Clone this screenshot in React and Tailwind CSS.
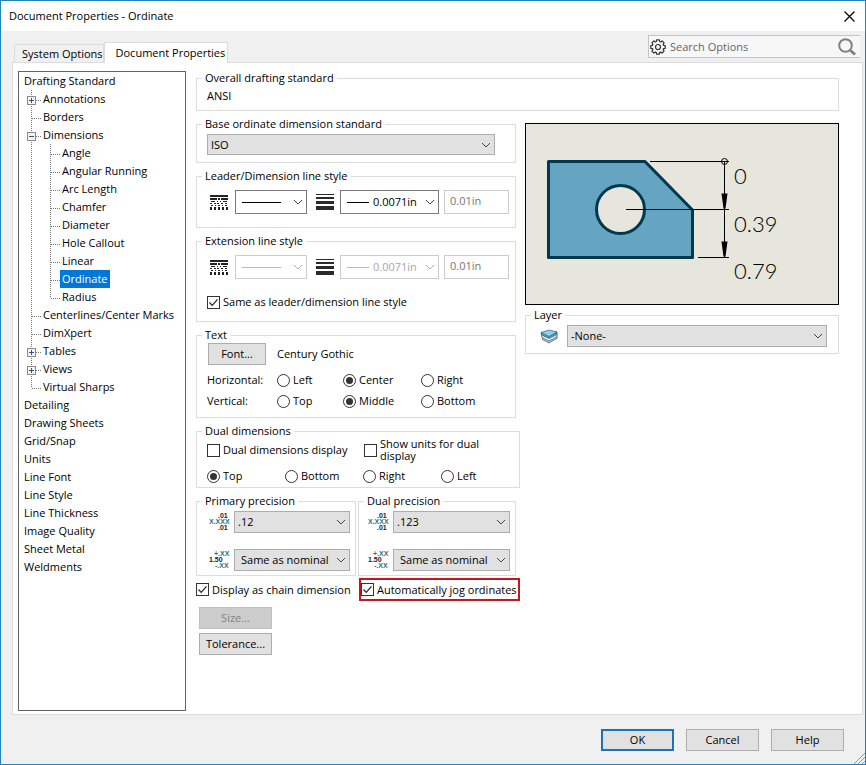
import React from 'react';

const treeItems = [
  { label: 'Drafting Standard', guides: [] },
  { label: 'Annotations', guides: ['plus'] },
  { label: 'Borders', guides: ['tee'] },
  { label: 'Dimensions', guides: ['minus'] },
  { label: 'Angle', guides: ['line', 'tee'] },
  { label: 'Angular Running', guides: ['line', 'tee'] },
  { label: 'Arc Length', guides: ['line', 'tee'] },
  { label: 'Chamfer', guides: ['line', 'tee'] },
  { label: 'Diameter', guides: ['line', 'tee'] },
  { label: 'Hole Callout', guides: ['line', 'tee'] },
  { label: 'Linear', guides: ['line', 'tee'] },
  { label: 'Ordinate', guides: ['line', 'tee'], selected: true },
  { label: 'Radius', guides: ['line', 'elbow'] },
  { label: 'Centerlines/Center Marks', guides: ['tee'] },
  { label: 'DimXpert', guides: ['tee'] },
  { label: 'Tables', guides: ['plus'] },
  { label: 'Views', guides: ['plus'] },
  { label: 'Virtual Sharps', guides: ['elbow'] },
  { label: 'Detailing', guides: [] },
  { label: 'Drawing Sheets', guides: [] },
  { label: 'Grid/Snap', guides: [] },
  { label: 'Units', guides: [] },
  { label: 'Line Font', guides: [] },
  { label: 'Line Style', guides: [] },
  { label: 'Line Thickness', guides: [] },
  { label: 'Image Quality', guides: [] },
  { label: 'Sheet Metal', guides: [] },
  { label: 'Weldments', guides: [] },
];

const TreeGuide = ({ kind }) => {
  const box = kind === 'plus' || kind === 'minus';
  return (
    <svg className="h-[18px] w-[19px] shrink-0" viewBox="0 0 19 18" fill="none" shapeRendering="crispEdges">
      <path d={kind === 'elbow' ? 'M9.5 0V10' : 'M9.5 0V18'} stroke="#777" strokeDasharray="1 1" />
      {kind !== 'line' && <path d="M10 10.5H19" stroke="#777" strokeDasharray="1 1" />}
      {box && (
        <>
          <rect x="5.5" y="6.5" width="8" height="8" fill="#f4f4f4" stroke="#8a8a8a" />
          <path d="M7 10.5h5" stroke="#334f9a" />
        </>
      )}
      {kind === 'plus' && <path d="M9.5 8v5" stroke="#334f9a" />}
    </svg>
  );
};

const Group = ({ title, className = '', bodyClass = '', children }) => (
  <fieldset className={`min-w-0 border border-[#dcdcdc] ${className}`}>
    <legend className="ml-[5px] px-[3px] leading-[14px]">{title}</legend>
    <div className={bodyClass}>{children}</div>
  </fieldset>
);

const Select = ({ label, options, white, disabled, line, className = '', textClass = 'pl-[3px]' }) => (
  <div className={`relative ${className}`}>
    <select
      aria-label={label}
      disabled={disabled}
      className={`block h-full w-full appearance-none border pr-5 outline-none ${
        white ? (disabled ? 'border-[#cccccc] bg-white text-[#a8a8a8]' : 'border-[#7a7a7a] bg-white') : 'border-[#adadad] bg-[#e1e1e1]'
      } ${textClass}`}
    >
      {options.map((option) => (
        <option key={option}>{option}</option>
      ))}
    </select>
    {line && <span className={`pointer-events-none absolute left-[7px] top-1/2 h-px ${line} ${disabled ? 'bg-[#b8b8b8]' : 'bg-black'}`} />}
    <svg className="pointer-events-none absolute right-1 top-1/2 -mt-[3px] h-[6px] w-[10px]" viewBox="0 0 10 6" fill="none" stroke={disabled ? '#b0b0b0' : '#444'}>
      <path d="M1 1l4 4 4-4" />
    </svg>
  </div>
);

const Checkbox = ({ label, checked, className = '', labelClass = '' }) => (
  <label className={`flex items-center gap-[3px] ${className}`}>
    <span className="relative block size-[13px] shrink-0">
      <input type="checkbox" defaultChecked={checked} className="peer block size-[13px] appearance-none border border-[#333] bg-white" />
      <svg className="pointer-events-none absolute inset-0 hidden size-[13px] peer-checked:block" viewBox="0 0 13 13" fill="none" stroke="#222" strokeWidth="1.2">
        <path d="M2.5 6.5l2.7 2.8 5.3-6" />
      </svg>
    </span>
    <span className={labelClass}>{label}</span>
  </label>
);

const Radio = ({ name, label, checked }) => (
  <label className="flex items-center gap-[3px]">
    <input
      type="radio"
      name={name}
      defaultChecked={checked}
      className="grid size-[13px] shrink-0 appearance-none place-content-center rounded-full border border-[#333] bg-white before:block before:size-[7px] before:rounded-full checked:before:bg-[#333]"
    />
    {label}
  </label>
);

const Button = ({ children, disabled, className = 'border border-[#adadad]' }) => (
  <button disabled={disabled} className={`h-[22px] bg-[#e1e1e1] disabled:border-[#bfbfbf] disabled:bg-[#cccccc] disabled:text-[#838383] ${className}`}>
    {children}
  </button>
);

const LineStyleIcon = () => (
  <svg className="h-[15px] w-[18px] shrink-0" viewBox="0 0 18 15" fill="#222" shapeRendering="crispEdges">
    <path d="M0 0h18v2H0z" />
    <path d="M0 3h7v2H0zM8 3h2v2H8zM11 3h7v2h-7z" />
    <path d="M1 6h4v1H1zM7 6h1v1H7zM10 6h1v1h-1zM13 6h4v1h-4z" />
    <path d="M0 8h2v1H0zM4 8h2v1H4zM7 8h2v1H7zM11 8h2v1h-2zM15 8h2v1h-2z" />
    <path d="M1 10h2v1H1zM5 10h1v1H5zM8 10h2v1H8zM12 10h1v1h-1zM15 10h2v1h-2z" />
    <path d="M0 12h2v3H0zM4 12h2v3H4zM8 12h2v3H8zM12 12h2v3h-2zM16 12h2v3h-2z" />
  </svg>
);

const LineWidthIcon = () => (
  <svg className="h-4 w-[18px] shrink-0" viewBox="0 0 18 16" fill="#2a2a2a" shapeRendering="crispEdges">
    <path d="M0 0h18v1H0zM0 3h18v2H0zM0 7h18v3H0zM0 12h18v4H0z" />
  </svg>
);

const LineStyleRow = ({ name, disabled }) => (
  <div className="flex items-center pl-[13px]">
    <LineStyleIcon />
    <Select label={`${name} line style`} options={['']} white disabled={disabled} line="w-[39px]" className="ml-[7px] h-6 w-[72px]" />
    <span className="ml-[9px] flex"><LineWidthIcon /></span>
    <Select label={`${name} line thickness`} options={['0.0071in']} white disabled={disabled} line="w-[22px]" className="ml-[6px] h-6 w-[99px]" textClass="pl-8" />
    <input
      aria-label={`${name} custom thickness`}
      defaultValue="0.01in"
      readOnly
      className="ml-[5px] h-6 w-[65px] border border-[#cccccc] bg-white px-[5px] pb-1 text-[#777] outline-none"
    />
  </div>
);

const PrecisionIcon = () => (
  <svg className="h-5 w-[22px] shrink-0" viewBox="0 0 22 20" fontFamily="Liberation Sans, sans-serif" fontSize="7" fontWeight="bold">
    <text x="9" y="6" fill="#222">.01</text>
    <text x="0" y="12" fill="#2b7387">X.XXX</text>
    <text x="9" y="18" fill="#222">.01</text>
  </svg>
);

const ToleranceIcon = () => (
  <svg className="h-5 w-[22px] shrink-0" viewBox="0 0 22 20" fontFamily="Liberation Sans, sans-serif" fontSize="7" fontWeight="bold">
    <text x="5" y="6" fill="#2b7387">+.XX</text>
    <text x="0" y="12" fill="#222">1.50</text>
    <text x="6" y="18" fill="#2b7387">-.XX</text>
  </svg>
);

const PrecisionGroup = ({ title, value, className, inset }) => (
  <Group title={title} className={className} bodyClass={`flex flex-col gap-4 pb-1 pr-[5px] pt-[3px] ${inset}`}>
    <div className="flex items-center gap-[3px]">
      <PrecisionIcon />
      <Select label={`${title} unit`} options={[value]} className="h-[22px] flex-1" />
    </div>
    <div className="flex items-center gap-[3px]">
      <ToleranceIcon />
      <Select label={`${title} tolerance`} options={['Same as nominal']} className="h-[22px] flex-1" textClass="pl-[6px]" />
    </div>
  </Group>
);

const Preview = () => (
  <svg className="w-full border border-black bg-[#e6e6dd]" viewBox="0 0 312 180" fill="none">
    <path d="M22.5 37.5H119L166.5 86V133.5H22.5z" fill="#66a5c2" stroke="#003850" strokeWidth="3" strokeLinejoin="round" />
    <circle cx="94.5" cy="85.5" r="24" fill="#e6e6dd" stroke="#003850" strokeWidth="3" />
    <path d="M124 37.5H203M100 85.5H203M172 133.5H203M198.5 38V133" stroke="#000" shapeRendering="crispEdges" />
    <circle cx="198.5" cy="37.5" r="3" stroke="#000" />
    <path d="M195.5 69.5h6l-2 15h-2zM195.5 117.5h6l-2 15h-2z" fill="#000" />
    <g fill="#000" fontFamily="Lato, sans-serif" fontSize="22" fontWeight="300">
      <text x="208" y="60">0</text>
      <text x="208" y="108">0.39</text>
      <text x="208" y="155">0.79</text>
    </g>
  </svg>
);

const LayerIcon = () => (
  <svg className="h-[15px] w-[18px] shrink-0" viewBox="0 0 18 15" strokeLinejoin="round" strokeWidth="0.6">
    <path d="M2 7.5l.5 3 6.500 3.500 8-4.500V6z" fill="#b9c4ca" stroke="#34444e" />
    <path d="M1.500 5.500l.5 3 7 3.500 8-4.500V4z" fill="#f2f7fa" stroke="#34444e" />
    <path d="M1 3.500l.5 2.500L9 9.500l8-4V3z" fill="#4ba3c7" stroke="#23485a" />
    <path d="M1 3.500L9 1l8 2-8 4.500z" fill="#8fd0ea" stroke="#23485a" />
  </svg>
);

const GearIcon = () => (
  <svg className="size-4 shrink-0" viewBox="0 0 16 16" fill="none" stroke="#333" strokeWidth="1.2" strokeLinejoin="round">
    <path d="M6.3 2.5L6.600.8h2.800l.3 1.700 1 .4 1.400-1 2 2-1 1.400.4 1 1.700.3v2.800l-1.700.3-.4 1 1 1.400-2 2-1.400-1-1 .4-.3 1.700H6.600l-.3-1.700-1-.4-1.400 1-2-2 1-1.400-.4-1-1.700-.3V6.600l1.700-.3.4-1-1-1.400 2-2 1.400 1z" />
    <circle cx="8" cy="8" r="2.5" />
  </svg>
);

const App = () => {
  return (
    <div className="flex min-h-screen flex-col border border-[#1f83c4] bg-[#f0f0f0] font-['Open_Sans','Noto_Sans',sans-serif] text-[11px] leading-4 text-black">
      <header className="flex h-[30px] items-center justify-between bg-white pl-2 pr-[10px]">
        <h1>Document Properties - Ordinate</h1>
        <button aria-label="Close">
          <svg className="size-[11px]" viewBox="0 0 11 11" fill="none" stroke="#000" strokeWidth="1.2">
            <path d="M.5.5l10 10M10.5.5l-10 10" />
          </svg>
        </button>
      </header>

      <div className="flex justify-between pl-[13px] pr-[5px]">
        <div className="flex items-end pt-[11px]">
          <button className="h-[18px] border border-b-0 border-[#dcdcdc] pl-[7px]">System Options</button>
          <button className="relative -mb-px h-[21px] border border-b-0 border-[#dcdcdc] bg-white pl-[11px] pr-[2px]">Document Properties</button>
        </div>
        <div className="mt-1 flex h-[23px] w-[212px] items-center border border-r-0 border-[#c4c4c4] bg-[#f7f7f7] pl-px pr-1">
          <GearIcon />
          <input aria-label="Search Options" placeholder="Search Options" className="min-w-0 flex-1 bg-transparent pl-1 outline-none placeholder:text-[#666]" />
          <svg className="size-[18px] shrink-0" viewBox="0 0 18 18" fill="none" stroke="#808080">
            <circle cx="7.5" cy="7.5" r="6.3" strokeWidth="2" />
            <path d="M12.5 12.5l4.5 4" strokeWidth="3" />
          </svg>
        </div>
      </div>

      <main className="ml-[11px] mr-[2px] flex flex-1 gap-[10px] border border-[#dcdcdc] bg-white pb-[3px] pl-[5px] pr-[23px] pt-2">
        <nav className="w-[168px] shrink-0 border border-[#646464] pl-[3px]">
          <ul>
            {treeItems.map((item) => (
              <li key={item.label} className="flex h-[18px]">
                {item.guides.map((kind, i) => (
                  <TreeGuide key={i} kind={kind} />
                ))}
                <a href="#" className={`whitespace-nowrap px-[2px] leading-[18px] ${item.selected ? 'bg-[#0078d7] text-white' : ''}`}>
                  {item.label}
                </a>
              </li>
            ))}
          </ul>
        </nav>

        <div className="flex min-w-0 flex-1 flex-col gap-[6px]">
          <Group title="Overall drafting standard" bodyClass="px-[10px] pb-[6px] pt-[3px]">
            <p>ANSI</p>
          </Group>

          <div className="flex gap-[5px]">
            <div className="flex w-[324px] shrink-0 flex-col gap-[6px]">
              <Group title="Base ordinate dimension standard" className="mr-1" bodyClass="px-[10px] pb-[7px] pt-[3px]">
                <Select label="Base ordinate dimension standard" options={['ISO']} className="h-[21px] w-[288px]" />
              </Group>

              <Group title="Leader/Dimension line style" className="mr-1" bodyClass="pb-[13px] pt-[7px]">
                <LineStyleRow name="Leader" />
              </Group>

              <Group title="Extension line style" className="mr-1" bodyClass="pb-[11px] pt-[7px]">
                <LineStyleRow name="Extension" disabled />
                <Checkbox label="Same as leader/dimension line style" checked className="mt-[15px] pl-[10px]" />
              </Group>

              <Group title="Text" className="mr-1" bodyClass="pb-2 pl-[10px] pt-px">
                <div className="flex items-center gap-[11px] pl-px">
                  <Button className="w-[58px] border border-[#adadad]">Font...</Button>
                  <span>Century Gothic</span>
                </div>
                <div className="mt-[7px] grid grid-cols-[70px_66px_78px_1fr] gap-y-[5px]">
                  <span>Horizontal:</span>
                  <Radio name="horizontal" label="Left" />
                  <Radio name="horizontal" label="Center" checked />
                  <Radio name="horizontal" label="Right" />
                  <span>Vertical:</span>
                  <Radio name="vertical" label="Top" />
                  <Radio name="vertical" label="Middle" checked />
                  <Radio name="vertical" label="Bottom" />
                </div>
              </Group>

              <Group title="Dual dimensions" bodyClass="pb-[3px] pl-[10px]">
                <div className="grid grid-cols-[157px_1fr]">
                  <Checkbox label="Dual dimensions display" />
                  <Checkbox label="Show units for dual display" labelClass="w-[110px] leading-[12px]" />
                </div>
                <div className="mt-[6px] grid grid-cols-[78px_78px_78px_1fr]">
                  <Radio name="dual" label="Top" checked />
                  <Radio name="dual" label="Bottom" />
                  <Radio name="dual" label="Right" />
                  <Radio name="dual" label="Left" />
                </div>
              </Group>

              <div className="mr-1 flex gap-[2px]">
                <PrecisionGroup title="Primary precision" value=".12" className="w-[160px]" inset="pl-[12px]" />
                <PrecisionGroup title="Dual precision" value=".123" className="flex-1" inset="pl-[9px]" />
              </div>

              <div className="-mt-1 flex items-center justify-between">
                <Checkbox label="Display as chain dimension" checked />
                <Checkbox label="Automatically jog ordinates" checked className="h-[23px] w-[161px] whitespace-nowrap border-2 border-[#c4161c]" />
              </div>

              <div className="flex w-[76px] flex-col gap-1 pl-[3px]">
                <Button disabled>Size...</Button>
                <Button>Tolerance...</Button>
              </div>
            </div>

            <div className="flex min-w-0 flex-1 flex-col gap-[3px] pt-[6px]">
              <Preview />
              <Group title="Layer" bodyClass="pb-[6px] pl-[14px] pr-[11px] pt-[3px]">
                <div className="flex items-center gap-[9px]">
                  <LayerIcon />
                  <Select label="Layer" options={['-None-']} className="h-[22px] flex-1" />
                </div>
              </Group>
            </div>
          </div>
        </div>
      </main>

      <footer className="relative flex h-[49px] items-center justify-end gap-3 pr-[21px]">
        <Button className="w-[73px] border-2 border-[#1c74b5]">OK</Button>
        <Button className="w-[73px] border border-[#adadad]">Cancel</Button>
        <Button className="w-[73px] border border-[#adadad]">Help</Button>
        <svg className="absolute bottom-0 right-0 size-3" viewBox="0 0 12 12" stroke="#9a9a9a">
          <path d="M1 12L12 1M5 12l7-7M9 12l3-3" />
        </svg>
      </footer>
    </div>
  );
};

export default App;
